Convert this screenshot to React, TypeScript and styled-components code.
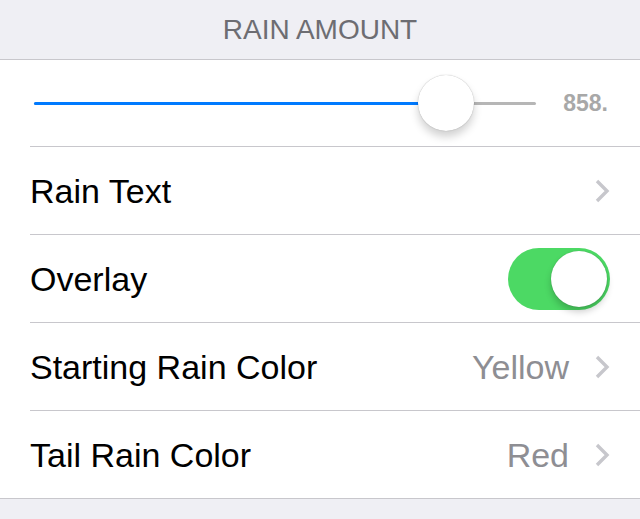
import { createGlobalStyle, styled } from "styled-components";

const GlobalStyle = createGlobalStyle`
    html, body {
        margin: 0;
        padding: 0;
        background: #efeff4;
        font-family: "Liberation Sans", Arial, sans-serif;
    }
`;

const Page = styled.div`
    width: 640px;
    height: 519px;
    background: #efeff4;
    overflow: hidden;
`;

const SectionHeader = styled.div`
    height: 59px;
    display: flex;
    align-items: center;
    justify-content: center;
    font-size: 28px;
    color: #6d6d72;
    padding-top: 1px;
    box-sizing: border-box;
`;

const Group = styled.div`
    background: #ffffff;
    border-top: 1px solid #c8c7cc;
    border-bottom: 1px solid #c8c7cc;
`;

const Cell = styled.div<{ $last?: boolean; $height: number }>`
    margin-left: 30px;
    height: ${p => p.$height}px;
    display: flex;
    align-items: center;
    padding-right: 30px;
    border-bottom: ${p => (p.$last ? "none" : "1px solid #c8c7cc")};
`;

const SliderCell = styled(Cell)`
    padding-left: 4px;
    padding-right: 32px;
`;

const Track = styled.div`
    position: relative;
    flex: 1;
    height: 3px;
    border-radius: 2px;
    background: #b6b6b6;
`;

const Fill = styled.div`
    position: absolute;
    left: 0;
    top: 0;
    bottom: 0;
    background: #007aff;
    border-radius: 2px;
`;

const Thumb = styled.div`
    position: absolute;
    top: 50%;
    width: 56px;
    height: 56px;
    margin-left: -28px;
    margin-top: -28px;
    border-radius: 50%;
    background: #ffffff;
    box-shadow: 0 0 1px rgba(0, 0, 0, 0.35), 0 6px 8px rgba(0, 0, 0, 0.18);
`;

const SliderValue = styled.span`
    margin-left: 27px;
    font-size: 23px;
    font-weight: bold;
    color: #a8a8a8;
`;

const Label = styled.span`
    flex: 1;
    font-size: 34px;
    color: #000000;
    padding-top: 2px;
`;

const Detail = styled.span`
    font-size: 34px;
    color: #8e8e93;
    margin-right: 25px;
    padding-top: 2px;
`;

const Chevron = () => (
    <svg width="16" height="24" viewBox="0 0 16 24">
        <path d="M3 2 L13 12 L3 22" fill="none" stroke="#c7c7cc" strokeWidth="3.4" />
    </svg>
);

const Switch = styled.div<{ $on: boolean }>`
    position: relative;
    width: 102px;
    height: 62px;
    border-radius: 31px;
    background: ${p => (p.$on ? "#4cd964" : "#e5e5ea")};
`;

const Knob = styled.div<{ $on: boolean }>`
    position: absolute;
    top: 3px;
    left: ${p => (p.$on ? "43px" : "3px")};
    width: 56px;
    height: 56px;
    border-radius: 50%;
    background: #ffffff;
    box-shadow: 0 0 1px rgba(0, 0, 0, 0.3), 0 5px 7px rgba(0, 0, 0, 0.2);
`;

export default function App() {
    const ratio = 0.82;
    return (
        <Page>
            <GlobalStyle />
            <SectionHeader>RAIN AMOUNT</SectionHeader>
            <Group>
                <SliderCell $height={86}>
                    <Track>
                        <Fill style={{ width: `${ratio * 100}%` }} />
                        <Thumb style={{ left: `${ratio * 100}%` }} />
                    </Track>
                    <SliderValue>858.</SliderValue>
                </SliderCell>
                <Cell $height={87}>
                    <Label>Rain Text</Label>
                    <Chevron />
                </Cell>
                <Cell $height={87}>
                    <Label>Overlay</Label>
                    <Switch $on={true}>
                        <Knob $on={true} />
                    </Switch>
                </Cell>
                <Cell $height={87}>
                    <Label>Starting Rain Color</Label>
                    <Detail>Yellow</Detail>
                    <Chevron />
                </Cell>
                <Cell $height={87} $last>
                    <Label>Tail Rain Color</Label>
                    <Detail>Red</Detail>
                    <Chevron />
                </Cell>
            </Group>
        </Page>
    );
}
